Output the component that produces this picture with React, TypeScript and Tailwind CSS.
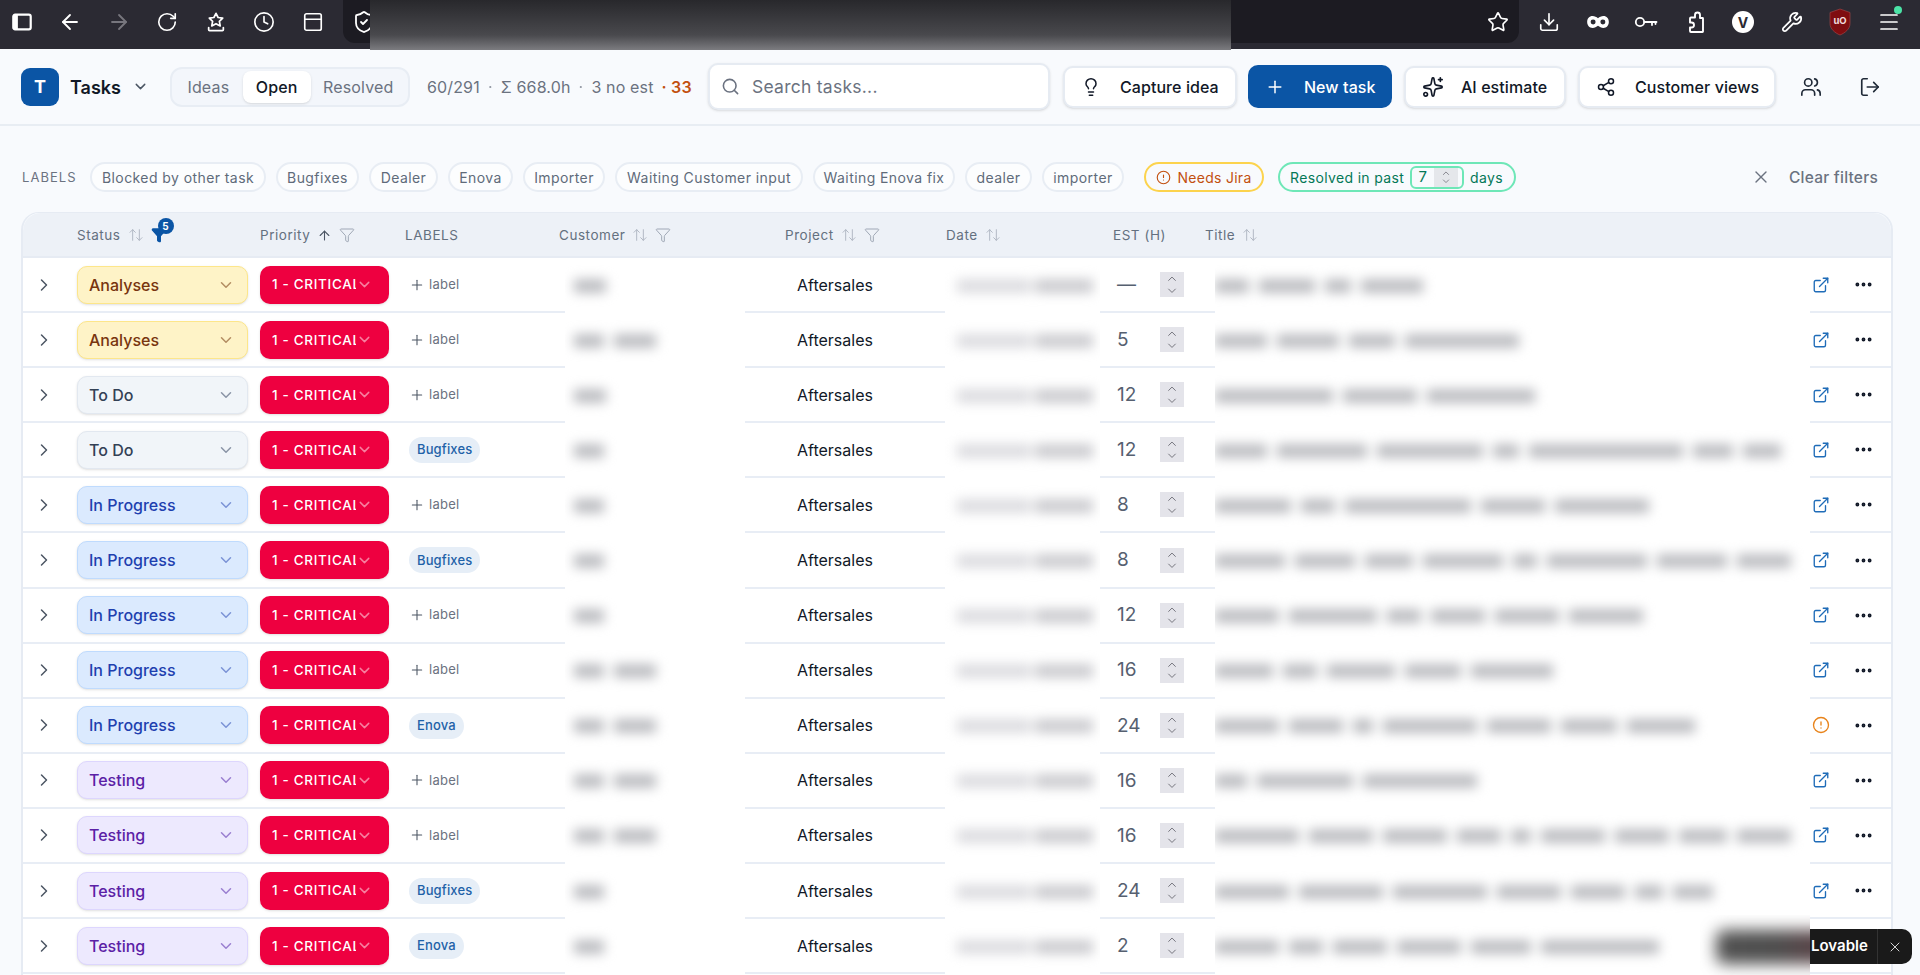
import React from "react";
import {
  ArrowLeft, ArrowRight, RotateCw, Clock, PanelTop, ShieldCheck, Star, Download, Wrench, Menu,
  ChevronDown, ChevronRight, ChevronUp, Search, Lightbulb, Plus, Sparkles, Share2, Users, LogOut, X,
  CircleAlert, ArrowUpDown, ArrowUp, Funnel, ExternalLink, Ellipsis,
} from "lucide-react";

type Row = { status: string; label: string; cust: number[]; est: string; title: number[]; warn?: boolean };

const S = { A: "Analyses", T: "To Do", P: "In Progress", Q: "Testing" };
const rows: Row[] = [
  { status: S.A, label: "", cust: [32], est: "—", title: [34, 56, 26, 62] },
  { status: S.A, label: "", cust: [30, 42], est: "5", title: [52, 62, 46, 114] },
  { status: S.T, label: "", cust: [32], est: "12", title: [118, 74, 108] },
  { status: S.T, label: "Bugfixes", cust: [30], est: "12", title: [52, 90, 106, 26, 154, 40, 38] },
  { status: S.P, label: "", cust: [30], est: "8", title: [76, 34, 126, 64, 94] },
  { status: S.P, label: "Bugfixes", cust: [30], est: "8", title: [70, 60, 48, 80, 24, 100, 70, 54] },
  { status: S.P, label: "", cust: [30], est: "12", title: [64, 88, 34, 54, 64, 74] },
  { status: S.P, label: "", cust: [30, 42], est: "16", title: [58, 34, 68, 56, 82] },
  { status: S.P, label: "Enova", cust: [30, 42], est: "24", title: [64, 54, 20, 94, 64, 56, 68], warn: true },
  { status: S.Q, label: "", cust: [30, 42], est: "16", title: [32, 96, 114] },
  { status: S.Q, label: "", cust: [30, 42], est: "16", title: [84, 64, 64, 44, 20, 64, 54, 48, 54] },
  { status: S.Q, label: "Bugfixes", cust: [30], est: "24", title: [74, 84, 94, 64, 54, 28, 40] },
  { status: S.Q, label: "Enova", cust: [30], est: "2", title: [64, 34, 54, 64, 60, 118] },
];

const statusStyle: Record<string, { box: string; chev: string }> = {
  [S.A]: { box: "bg-[#fef3c7] border-[#fde68a] text-[#78350f]", chev: "text-[#b38d62]" },
  [S.T]: { box: "bg-[#f1f5f9] border-[#e2e8f0] text-[#334155]", chev: "text-[#8a94a6]" },
  [S.P]: { box: "bg-[#dbeafe] border-[#bfdbfe] text-[#1e40af]", chev: "text-[#7b93d6]" },
  [S.Q]: { box: "bg-[#ede9fe] border-[#ddd6fe] text-[#5b21a6]", chev: "text-[#9a7fd1]" },
};

function Bars({ words, bar }: { words: number[]; bar: string }) {
  return (
    <div className="flex items-center gap-[10px] blur-[6px]">
      {words.map((w, i) => (
        <div key={i} className={`h-[14px] shrink-0 ${bar}`} style={{ width: w }} />
      ))}
    </div>
  );
}

function SidebarIcon() {
  return (
    <svg width="22" height="22" viewBox="0 0 24 24" fill="none" stroke="white" strokeWidth="2.4">
      <rect x="2.5" y="4" width="19" height="16" rx="2" />
      <rect x="2.5" y="4" width="5" height="16" fill="white" stroke="none" />
    </svg>
  );
}
function StarTray() {
  return (
    <svg width="22" height="22" viewBox="0 0 24 24" fill="none" stroke="white" strokeWidth="1.9" strokeLinejoin="round" strokeLinecap="round">
      <path d="M12 2.5l2.3 4.6 5 .7-3.6 3.5.9 5-4.6-2.4-4.6 2.4.9-5-3.6-3.5 5-.7z" />
      <path d="M4 18v2.5a1 1 0 0 0 1 1h14a1 1 0 0 0 1-1V18" />
    </svg>
  );
}
function MaskIcon() {
  return (
    <svg width="26" height="26" viewBox="0 0 24 24">
      <path fill="white" d="M7 6.500c2 0 3.500 1 5 2 1.500-1 3-2 5-2 3 0 5 2.400 5 5.500s-2 5.500-5 5.500c-2 0-3.500-1-5-2-1.500 1-3 2-5 2-3 0-5-2.400-5-5.500s2-5.500 5-5.500z" />
      <circle cx="7.500" cy="12" r="2.300" fill="#2b2a33" />
      <circle cx="16.500" cy="12" r="2.300" fill="#2b2a33" />
    </svg>
  );
}
function KeyIcon() {
  return (
    <svg width="24" height="24" viewBox="0 0 24 24" fill="none" stroke="white" strokeWidth="1.8" strokeLinecap="round">
      <circle cx="6" cy="12" r="4.200" />
      <path d="M10.200 12H22.500M18 12v3M21.500 12v2" />
    </svg>
  );
}
function PuzzleIcon() {
  return (
    <svg width="24" height="24" viewBox="0 0 24 24" fill="none" stroke="white" strokeWidth="1.9" strokeLinejoin="round">
      <path d="M9 7.500h3V5a2.500 2.500 0 0 1 5 0v3h2.500a.5.5 0 0 1 .5.500V21.500a.5.500 0 0 1-.5.500H8a1 1 0 0 1-1-1v-3.500h1.500a2.500 2.500 0 0 0 0-5H7V8.500a1 1 0 0 1 1-1z" />
    </svg>
  );
}
function UBlock() {
  return (
    <svg width="24" height="28" viewBox="0 0 24 28">
      <path fill="#7f0d10" stroke="#a84a4c" strokeWidth="0.6" d="M12 1l10 3.500v11c0 5.500-5 9.500-10 11.500C7 25 2 21 2 15.500v-11z" />
      <text x="12" y="15.500" textAnchor="middle" fontSize="9.500" fontWeight="700" fill="#f1dcdc" fontFamily="Inter, sans-serif">uO</text>
    </svg>
  );
}

function Slot({ children }: { children: React.ReactNode }) {
  return <div className="w-[40px] h-[44px] flex items-center justify-center shrink-0">{children}</div>;
}

function BrowserBar() {
  return (
    <div className="h-[49px] bg-[#2b2a33] flex items-start pl-[1.500px] shrink-0 gap-[8.500px]">
      <Slot><SidebarIcon /></Slot>
      <Slot><ArrowLeft size={24} color="white" strokeWidth={1.8} /></Slot>
      <Slot><ArrowRight size={24} color="#77767e" strokeWidth={1.8} /></Slot>
      <Slot><RotateCw size={22} color="white" strokeWidth={1.8} /></Slot>
      <Slot><StarTray /></Slot>
      <Slot><Clock size={22} color="white" strokeWidth={1.8} /></Slot>
      <Slot><PanelTop size={22} color="white" strokeWidth={1.8} /></Slot>
      <div className="ml-[2px] w-[1176px] h-[43px] bg-[#1c1b22] rounded-b-[12px] flex items-center justify-between px-[1px] shrink-0">
        <Slot><ShieldCheck size={24} color="white" strokeWidth={1.8} /></Slot>
        <Slot><Star size={22} color="white" strokeWidth={1.8} /></Slot>
      </div>
      <div className="ml-[1.500px] flex gap-[8.500px] shrink-0">
        <Slot><Download size={22} color="white" strokeWidth={1.8} /></Slot>
        <Slot><MaskIcon /></Slot>
        <Slot><KeyIcon /></Slot>
        <Slot><PuzzleIcon /></Slot>
        <Slot>
          <div className="w-[22px] h-[22px] rounded-full bg-white text-[#2b2a33] flex items-center justify-center text-[14px] font-bold">V</div>
        </Slot>
        <Slot><Wrench size={22} color="white" strokeWidth={1.9} /></Slot>
        <Slot><UBlock /></Slot>
        <Slot>
          <div className="relative">
            <Menu size={24} color="white" strokeWidth={1.7} />
            <div className="absolute -top-[4px] -right-[1px] w-[8px] h-[8px] rounded-full bg-[#4be3a6]" />
          </div>
        </Slot>
      </div>
    </div>
  );
}

function HeaderBtn({ icon, text, cls }: { icon: React.ReactNode; text: string; cls: string }) {
  return (
    <div className={`h-[42px] rounded-[10px] border-2 border-[#e6ebf2] bg-white shadow-sm flex items-center pl-[16px] text-[16px] font-medium tracking-[0.005em] text-[#111827] shrink-0 ${cls}`}>
      {icon}
      <span>{text}</span>
    </div>
  );
}

function TopHeader() {
  return (
    <div className="h-[77px] shrink-0 border-b-2 border-[#e8edf3] flex items-center pl-[21px]">
      <div className="w-[38px] h-[38px] rounded-[9px] bg-[#0b55a5] text-white font-bold text-[18px] flex items-center justify-center shrink-0">T</div>
      <div className="ml-[11px] mt-px text-[18px] font-semibold text-[#111827]">Tasks</div>
      <ChevronDown size={17} className="ml-[11px] text-[#4b5563]" />
      <div className="ml-[21px] w-[240px] h-[40px] rounded-[12px] border-2 border-[#e8edf4] bg-[#f3f6fb] flex items-center text-[16px] text-[#6b7280] tracking-[0.01em] px-[2px] shrink-0">
        <div className="w-[70px] text-center">Ideas</div>
        <div className="w-[69px] h-[32px] rounded-[8px] bg-white shadow-sm text-[#111827] font-medium flex items-center justify-center">Open</div>
        <div className="w-[97px] text-center">Resolved</div>
      </div>
      <div className="ml-[17px] w-[281px] shrink-0 flex items-center gap-[8px] text-[16px] text-[#6b7280] tracking-[0.01em]">
        <span>60/291</span><span className="opacity-70">·</span><span>Σ 668.0h</span><span className="opacity-70">·</span><span>3 no est</span>
        <span className="text-[#c2500f] font-semibold">· 33</span>
      </div>
      <div className="w-[342px] h-[47px] rounded-[10px] border-2 border-[#e6ebf2] bg-white shadow-sm flex items-center pl-[11px] gap-[12px] text-[17.500px] text-[#6b7280] tracking-[0.015em] shrink-0">
        <Search size={19} className="text-[#6b7280]" />
        <span className="mt-[2px]">Search tasks...</span>
      </div>
      <HeaderBtn cls="ml-[13px] w-[174px] gap-[19px]" icon={<Lightbulb size={20} strokeWidth={1.8} />} text="Capture idea" />
      <div className="ml-[11px] w-[144px] h-[43px] rounded-[10px] bg-[#0b55a5] text-white flex items-center pl-[17px] gap-[19px] text-[16px] font-medium tracking-[0.005em] shrink-0">
        <Plus size={20} strokeWidth={1.8} />
        <span>New task</span>
      </div>
      <HeaderBtn cls="ml-[12px] w-[162px] gap-[17px]" icon={<Sparkles size={22} strokeWidth={1.8} />} text="AI estimate" />
      <HeaderBtn cls="ml-[12px] w-[198px] gap-[19px]" icon={<Share2 size={20} strokeWidth={1.8} />} text="Customer views" />
      <Users size={22} strokeWidth={1.8} className="ml-[24px] text-[#1f2937] shrink-0" />
      <LogOut size={22} strokeWidth={1.8} className="ml-[37px] text-[#1f2937] shrink-0" />
    </div>
  );
}

function Chip({ w, children }: { w: string; children: React.ReactNode }) {
  return (
    <div className={`h-[30px] rounded-full border-2 border-[#e8edf4] bg-white/60 flex items-center justify-center text-[14px] tracking-[0.03em] text-[#5f6b7a] whitespace-nowrap shrink-0 ${w}`}>
      {children}
    </div>
  );
}

function Filters() {
  return (
    <div className="mt-[36px] ml-[22px] mr-[42px] h-[30px] flex items-center shrink-0">
      <div className="w-[68px] mt-px text-[13px] tracking-[0.08em] text-[#6b7280] shrink-0">LABELS</div>
      <div className="flex items-center gap-[10px]">
        <Chip w="w-[176px]">Blocked by other task</Chip>
        <Chip w="w-[83px]">Bugfixes</Chip>
        <Chip w="w-[69px]">Dealer</Chip>
        <Chip w="w-[65px]">Enova</Chip>
        <Chip w="w-[82px]">Importer</Chip>
        <Chip w="w-[188px]">Waiting Customer input</Chip>
        <Chip w="w-[142px]">Waiting Enova fix</Chip>
        <Chip w="w-[67px]">dealer</Chip>
        <Chip w="w-[82px]">importer</Chip>
      </div>
      <div className="ml-[20px] h-[30px] w-[120px] rounded-full border-2 border-[#fcd34d] flex items-center justify-center gap-[6px] text-[14px] tracking-[0.02em] text-[#c2500f] shrink-0">
        <CircleAlert size={15} strokeWidth={1.8} />
        <span>Needs Jira</span>
      </div>
      <div className="ml-[14px] h-[30px] w-[238px] rounded-full border-2 border-[#6ee7b7] flex items-center pl-[10px] text-[14px] tracking-[0.025em] text-[#047857] shrink-0">
        <span className="w-[120px] whitespace-nowrap">Resolved in past</span>
        <div className="w-[54px] h-[23px] rounded-[6px] border-2 border-[#6ee7b7] flex items-center overflow-hidden">
          <span className="w-[22px] text-center text-[15px]">7</span>
          <div className="w-[24px] h-full bg-[#e5e7eb] flex flex-col items-center justify-center text-[#6f6f78]">
            <ChevronUp size={12} strokeWidth={1.8} className="-mb-px" />
            <ChevronDown size={12} strokeWidth={1.8} className="-mt-px" />
          </div>
        </div>
        <span className="ml-[6px]">days</span>
      </div>
      <X size={20} strokeWidth={1.6} className="ml-auto text-[#6b7280] shrink-0" />
      <div className="ml-[18px] mt-px text-[15.500px] font-medium tracking-[0.015em] text-[#6b7280] shrink-0">Clear filters</div>
    </div>
  );
}

function Sort() {
  return <ArrowUpDown size={16} strokeWidth={1.5} className="text-[#b2b9c5] shrink-0" />;
}
function Fil() {
  return <Funnel size={16} strokeWidth={1.4} className="text-[#9aa3b0] shrink-0" />;
}

function TableHead() {
  return (
    <div className="h-[45px] pt-px bg-[#edf1f7] border-b-2 border-[#e6ebf3] rounded-t-[18px] flex items-center text-[13.500px] tracking-[0.04em] text-[#64707f] shrink-0">
      <div className="w-[54px] shrink-0" />
      <div className="w-[183px] shrink-0 flex items-center gap-[7px]">
        <span>Status</span>
        <Sort />
        <div className="relative">
          <Funnel size={16} className="text-[#0b55a5] fill-[#0b55a5]" />
          <div className="absolute -top-[9px] left-[7px] w-[16px] h-[16px] rounded-full bg-[#0b55a5] text-white text-[10px] font-bold flex items-center justify-center tracking-normal">5</div>
        </div>
      </div>
      <div className="w-[145px] shrink-0 flex items-center gap-[7px]">
        <span>Priority</span>
        <ArrowUp size={15} strokeWidth={1.7} className="text-[#4b5563]" />
        <Fil />
      </div>
      <div className="w-[154px] shrink-0">LABELS</div>
      <div className="w-[226px] shrink-0 flex items-center gap-[7px]"><span>Customer</span><Sort /><Fil /></div>
      <div className="w-[161px] shrink-0 flex items-center gap-[7px]"><span>Project</span><Sort /><Fil /></div>
      <div className="w-[167px] shrink-0 flex items-center gap-[7px]"><span>Date</span><Sort /></div>
      <div className="w-[92px] shrink-0">EST (H)</div>
      <div className="flex items-center gap-[7px]"><span>Title</span><Sort /></div>
    </div>
  );
}

function TableRow({ row }: { row: Row }) {
  const st = statusStyle[row.status];
  const line = "border-b-2 border-[#e8edf5]";
  return (
    <div className="h-[55.100px] flex shrink-0 bg-white">
      <div className={`w-[542px] shrink-0 flex items-center ${line}`}>
        <div className="w-[54px] pl-[11px] shrink-0">
          <ChevronRight size={20} strokeWidth={1.8} className="text-[#4b5563]" />
        </div>
        <div className="w-[183px] shrink-0">
          <div className={`w-[171px] h-[38px] rounded-[10px] border-[1.500px] shadow-sm flex items-center justify-between pl-[11px] pr-[12px] text-[16px] font-medium ${st.box}`}>
            <span>{row.status}</span>
            <ChevronDown size={18} className={st.chev} />
          </div>
        </div>
        <div className="w-[145px] shrink-0">
          <div className="w-[129px] h-[38px] rounded-[10px] bg-[#ee0040] shadow-sm flex items-center pl-[12px] text-white text-[13.500px] font-medium tracking-[0.05em]">
            <span className="w-[84px] overflow-hidden whitespace-nowrap shrink-0">1 - CRITICAL</span>
            <ChevronDown size={17} className="text-white/50 shrink-0" />
          </div>
        </div>
        <div className="flex-1">
          {row.label ? (
            <div className="ml-[4px] inline-flex h-[26px] px-[8px] rounded-full bg-[#e6eef7] items-center text-[13px] font-medium tracking-[0.01em] text-[#1f62a8]">{row.label}</div>
          ) : (
            <div className="ml-[4px] flex items-center gap-[4px] text-[13px] tracking-[0.02em] text-[#6b7280]">
              <Plus size={16} strokeWidth={1.6} className="text-[#4b5563]" />
              <span>label</span>
            </div>
          )}
        </div>
      </div>
      <div className="w-[180px] shrink-0 flex items-center pl-[9px] overflow-hidden">
        <Bars words={row.cust} bar="bg-[#bcbdc1]" />
      </div>
      <div className={`w-[200px] shrink-0 flex items-center pl-[52px] text-[16px] text-[#111827] ${line}`}>Aftersales</div>
      <div className="w-[155px] shrink-0 flex items-center pl-[12px] overflow-hidden">
        <div className="flex items-center gap-[4px] blur-[6px]">
          <div className="w-[74px] h-[14px] bg-[#dcdce0]" />
          <div className="w-[58px] h-[14px] bg-[#cbcbcf]" />
        </div>
      </div>
      <div className={`w-[115px] shrink-0 flex items-center pl-[17px] text-[19px] text-[#566070] ${line}`}>
        <span className="w-[43px] mt-px">{row.est}</span>
        <div className="w-[24px] h-[25px] bg-[#e4e4ea] flex flex-col items-center justify-center text-[#6f6f78]">
          <ChevronUp size={14} strokeWidth={1.7} className="-mb-px" />
          <ChevronDown size={14} strokeWidth={1.7} className="-mt-px" />
        </div>
      </div>
      <div className="w-[595px] shrink-0 flex items-center overflow-hidden">
        <Bars words={row.title} bar="bg-[#bcbdc1]" />
      </div>
      <div className={`flex-1 flex items-center pl-[2px] ${line}`}>
        {row.warn ? (
          <CircleAlert size={18} strokeWidth={1.8} className="text-[#e8831a] shrink-0" />
        ) : (
          <ExternalLink size={18} strokeWidth={1.8} className="text-[#1f6cb8] shrink-0" />
        )}
        <Ellipsis size={21} strokeWidth={2.400} className="ml-[23px] text-[#111827] shrink-0" />
      </div>
    </div>
  );
}

function Overlays() {
  return (
    <>
      <div className="absolute left-[370px] top-0 w-[861px] h-[50px] bg-gradient-to-b from-[#28282c] via-[#49494d] via-70% to-[#7c7c80]" />
      <div className="absolute left-[1700px] top-[915px] w-[110px] h-[60px] overflow-hidden">
        <div className="absolute left-[16px] top-[15px] w-[120px] h-[34px] rounded-lg bg-gradient-to-r from-[#505050] via-[#4d4d4d] to-[#5e3f45] blur-[8px]" />
      </div>
      <div className="absolute left-[1810px] top-[929px] w-[102px] h-[35px] rounded-r-[10px] bg-[#1a1a1a] flex items-center text-white">
        <span className="ml-[1px] w-[66px] text-[15px] font-semibold">Lovable</span>
        <div className="w-px h-full bg-[#333]" />
        <X size={16} strokeWidth={1.5} className="ml-[9px] text-[#d4d4d4]" />
      </div>
    </>
  );
}

export default function App() {
  return (
    <div className="relative w-[1920px] h-[975px] overflow-hidden bg-[#f8fafd] flex flex-col font-['Inter',sans-serif]">
      <BrowserBar />
      <TopHeader />
      <Filters />
      <div className="mt-[20px] ml-[21px] w-[1872px] flex-1 min-h-0 border-x-2 border-t border-[#e6ebf3] rounded-t-[18px] flex flex-col overflow-hidden">
        <TableHead />
        {rows.map((r, i) => (
          <TableRow key={i} row={r} />
        ))}
        <div className="h-[10px] bg-white shrink-0" />
      </div>
      <Overlays />
    </div>
  );
}
